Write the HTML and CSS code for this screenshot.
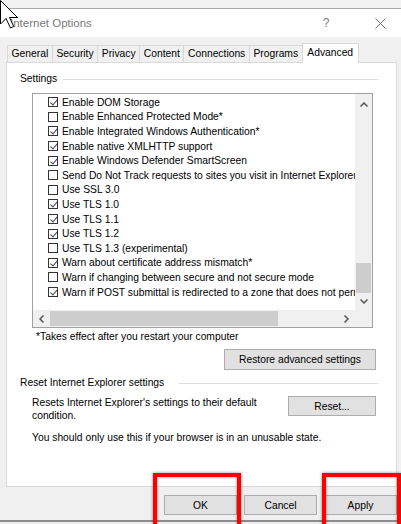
FILE: index.html
```html
<!DOCTYPE html>
<html lang="en">
<head>
  <meta charset="UTF-8">
  <title>Internet Options</title>
  <link rel="stylesheet" href="styles.css">
</head>
<body>
  <div class="desk"></div>
  <header class="titlebar">
    <span class="title">Internet Options</span>
    <span class="help">?</span>
    <span class="close">
      <svg width="11" height="11" viewBox="0 0 11 11"><path d="M0.5 0.5 L10.5 10.5 M10.5 0.5 L0.5 10.5" stroke="#6f6f6f" stroke-width="1" fill="none"/></svg>
    </span>
  </header>

  <nav class="tabs">
    <span class="tab">General</span>
    <span class="tab">Security</span>
    <span class="tab">Privacy</span>
    <span class="tab">Content</span>
    <span class="tab">Connections</span>
    <span class="tab">Programs</span>
    <span class="tab active">Advanced</span>
  </nav>

  <section class="panel">
    <div class="legend">Settings</div>
    <div class="listbox">
      <ul class="items">
        <li><span class="cb on"></span>Enable DOM Storage</li>
        <li><span class="cb"></span>Enable Enhanced Protected Mode*</li>
        <li><span class="cb on"></span>Enable Integrated Windows Authentication*</li>
        <li><span class="cb on"></span>Enable native XMLHTTP support</li>
        <li><span class="cb on"></span>Enable Windows Defender SmartScreen</li>
        <li><span class="cb"></span>Send Do Not Track requests to sites you visit in Internet Explorer*</li>
        <li><span class="cb"></span>Use SSL 3.0</li>
        <li><span class="cb on"></span>Use TLS 1.0</li>
        <li><span class="cb on"></span>Use TLS 1.1</li>
        <li><span class="cb on"></span>Use TLS 1.2</li>
        <li><span class="cb"></span>Use TLS 1.3 (experimental)</li>
        <li><span class="cb on"></span>Warn about certificate address mismatch*</li>
        <li><span class="cb"></span>Warn if changing between secure and not secure mode</li>
        <li><span class="cb on"></span>Warn if POST submittal is redirected to a zone that does not permit posts</li>
      </ul>
      <div class="vscroll">
        <span class="arrow up"><svg width="8" height="5" viewBox="0 0 8 5"><polyline points="0.5,4.5 4,1 7.5,4.5" stroke="#555" stroke-width="1.5" fill="none"/></svg></span>
        <div class="vtrack"><span class="vthumb"></span></div>
        <span class="arrow"><svg width="8" height="5" viewBox="0 0 8 5"><polyline points="0.5,0.5 4,4 7.5,0.5" stroke="#555" stroke-width="1.5" fill="none"/></svg></span>
      </div>
      <div class="hscroll">
        <span class="arrow"><svg width="5" height="8" viewBox="0 0 5 8"><polyline points="4.5,0.5 1,4 4.5,7.5" stroke="#555" stroke-width="1.5" fill="none"/></svg></span>
        <span class="hthumb"></span>
        <span class="hspace"></span>
        <span class="arrow"><svg width="5" height="8" viewBox="0 0 5 8"><polyline points="0.5,0.5 4,4 0.5,7.5" stroke="#555" stroke-width="1.5" fill="none"/></svg></span>
      </div>
      <div class="corner"></div>
    </div>
    <p class="note">*Takes effect after you restart your computer</p>
    <button class="btn restore">Restore advanced settings</button>

    <div class="legend wide">Reset Internet Explorer settings</div>
    <div class="reset-row">
      <p>Resets Internet Explorer's settings to their default condition.</p>
      <button class="btn reset">Reset...</button>
    </div>
    <p class="warn">You should only use this if your browser is in an unusable state.</p>
  </section>

  <footer class="actions">
    <button class="btn">OK</button>
    <button class="btn">Cancel</button>
    <button class="btn">Apply</button>
  </footer>
  <div class="edge"></div>

  <!-- annotations + mouse pointer lie over the dialog -->
  <div class="mark mark-ok"></div>
  <div class="mark mark-apply"></div>
  <svg class="pointer" width="20" height="30" viewBox="0 0 20 30">
    <path d="M0.5 0.5 L0.5 24 L6 18.5 L10.5 28 L13.8 26.5 L9.5 17.5 L17.5 17.5 Z" fill="#fff" stroke="#000" stroke-width="1"/>
  </svg>
</body>
</html>
```

FILE: styles.css
```css
body { margin: 0; width: 401px; height: 524px; overflow: hidden; position: relative; display: flex; flex-direction: column; background: #f0f0f0; font-family: "Liberation Sans", Arial, sans-serif; font-size: 10.3px; color: #000; }
p { margin: 0; }

.desk { height: 8px; background: #f2f2f2; border-bottom: 1px solid #a9a9a9; }
.titlebar { height: 28px; background: #fff; display: flex; align-items: center; padding-left: 10px; color: #7a7a7a; }
.title { flex: 1; font-size: 11.5px; }
.help { width: 14px; margin-right: 40px; text-align: center; font-size: 12px; }
.close { width: 14px; margin-right: 14px; display: flex; justify-content: center; }

.tabs { display: flex; align-items: flex-end; height: 19px; margin-top: 6px; padding-left: 7px; }
.tab { height: 17px; box-sizing: border-box; padding: 0 3.6px; line-height: 16px; border: 1px solid #d9d9d9; border-bottom: none; margin-right: -1px; background: #f0f0f0; }
.tab.active { height: 20px; margin-bottom: -1px; padding: 0 4.6px; line-height: 17px; background: #fff; position: relative; z-index: 1; }

.panel { height: 425px; box-sizing: border-box; margin: 0 4px 0 6px; padding: 10px 18px 0 13px; border: 1px solid #d9d9d9; background: #fff; display: flex; flex-direction: column; }
.legend { height: 12px; line-height: 12px; display: flex; align-items: center; gap: 6px; }
.legend::after { content: ""; flex: 1; border-top: 1px solid #dcdcdc; }
.legend.wide { margin-top: 7px; gap: 15px; }

.listbox { height: 235px; box-sizing: border-box; margin: 8px 5px 0 12px; border: 1px solid #a0a0a0; display: grid; grid-template-columns: 1fr 17px; grid-template-rows: 1fr 17px; }
.items { list-style: none; margin: 0; padding: 1px 0 0; overflow: hidden; min-width: 0; }
.items li { height: 14.6px; display: flex; align-items: center; padding-left: 15px; white-space: nowrap; }
.cb { width: 10px; height: 10px; box-sizing: border-box; border: 1px solid #333; margin-right: 4px; flex: none; position: relative; background: #fff; }
.cb.on::after { content: ""; position: absolute; left: 2.5px; top: 0; width: 2.5px; height: 5.5px; border: solid #444; border-width: 0 1px 1px 0; transform: rotate(40deg); }

.vscroll { display: flex; flex-direction: column; background: #f0f0f0; }
.vtrack { flex: 1; display: flex; flex-direction: column; justify-content: flex-end; }
.vthumb { height: 30px; margin: 0 1px; background: #cdcdcd; }
.arrow { width: 17px; height: 17px; display: flex; align-items: center; justify-content: center; flex: none; }
.arrow.up { align-items: flex-start; box-sizing: border-box; padding-top: 8px; }
.hscroll { display: flex; background: #f0f0f0; }
.hthumb { width: 228px; margin: 1px 0; background: #cdcdcd; }
.hspace { flex: 1; }
.corner { background: #f0f0f0; }

.note { margin-top: 3px; padding-left: 16px; line-height: 12px; }
.btn { font: inherit; color: #000; background: #e1e1e1; border: 1px solid #adadad; padding: 0; height: 20px; }
.restore { align-self: flex-end; width: 152px; height: 21px; margin: 6px 2px 0 0; }
.reset-row { display: flex; justify-content: space-between; align-items: flex-start; margin: 7px 2px 0 12px; }
.reset-row p { width: 245px; line-height: 13.3px; }
.reset { width: 88px; }
.warn { margin: 8px 0 0 12px; line-height: 13px; }

.actions { display: flex; justify-content: flex-end; gap: 7px; margin-top: 8px; padding-right: 4px; }
.actions .btn { width: 73px; }
.edge { height: 2px; margin-top: 5px; background: #8c8c8c; }

.mark { position: absolute; top: 473px; height: 60px; box-sizing: border-box; border: 4px solid #ff0000; box-shadow: 0 0 3px rgba(0,0,0,.45), inset 0 0 3px rgba(0,0,0,.45); }
.mark-ok { left: 153px; width: 88px; }
.mark-apply { left: 322px; width: 79px; }
.pointer { position: absolute; left: 0; top: 0; }
```
